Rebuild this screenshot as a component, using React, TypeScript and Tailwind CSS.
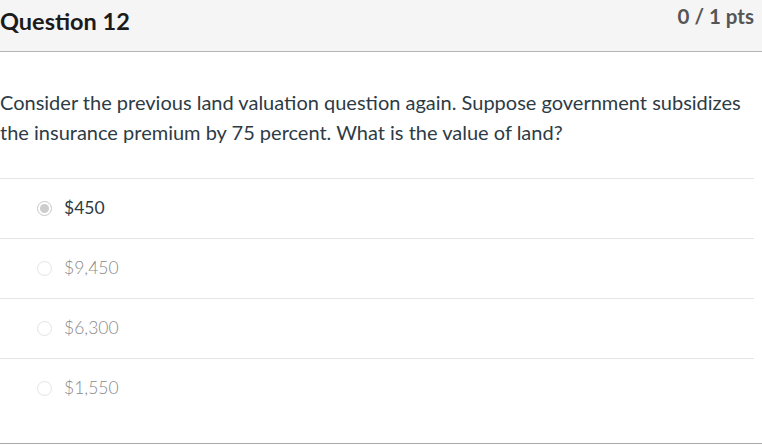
import React from 'react';

const answers = [
  { label: '$450', selected: true },
  { label: '$9,450', selected: false },
  { label: '$6,300', selected: false },
  { label: '$1,550', selected: false },
];

const Radio: React.FC<{ selected: boolean }> = ({ selected }) => (
  <span
    className={
      selected
        ? 'flex h-[15px] w-[15px] items-center justify-center rounded-full border border-[#c8c8c8] bg-white'
        : 'flex h-[15px] w-[15px] items-center justify-center rounded-full border border-[#e4e4e4] bg-white'
    }
  >
    {selected && <span className="h-[9px] w-[9px] rounded-full bg-[#cdcdcd]" />}
  </span>
);

export default function App() {
  return (
    <div className="h-[447px] w-[762px] bg-white" style={{ fontFamily: 'Lato, "Open Sans", sans-serif' }}>
      <div className="flex h-[52px] items-start justify-between border-b border-[#b5b5b5] bg-[#f5f5f5] pr-[8px]">
        <h2 className="mt-[7px] text-[23.5px] font-bold leading-[28px] text-[#1b1b1b]">Question 12</h2>
        <span className="mt-[3px] text-[20.5px] font-bold leading-[26px] text-[#555]">0 / 1 pts</span>
      </div>

      <div className="w-[754px]">
        <p className="pb-[31px] pt-[35px] text-[20px] leading-[30px] text-[#2d3b45]">
          Consider the previous land valuation question again. Suppose government subsidizes the insurance premium by 75
          percent. What is the value of land?
        </p>

        <div className="h-[265px]">
          {answers.map((a) => (
            <div key={a.label} className="flex h-[60px] items-center gap-[12px] border-t border-[#e5e5e5] pl-[37px]">
              <Radio selected={a.selected} />
              <span
                className={
                  a.selected ? 'text-[17.5px] text-[#2d3b45]' : 'text-[17.5px] font-light text-[#8a8a8a]'
                }
              >
                {a.label}
              </span>
            </div>
          ))}
        </div>
      </div>
      <div className="border-t border-[#aaaaaa]" />
    </div>
  );
}
